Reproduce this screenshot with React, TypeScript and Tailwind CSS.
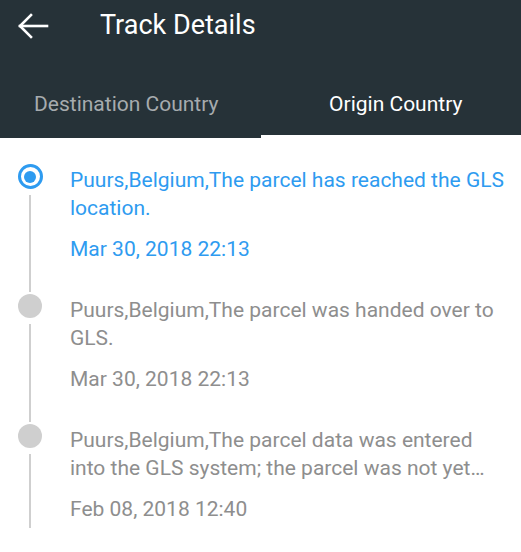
import React from "react";

const items = [
  {
    text: "Puurs,Belgium,The parcel has reached the GLS location.",
    date: "Mar 30, 2018 22:13",
    active: true,
  },
  {
    text: "Puurs,Belgium,The parcel was handed over to GLS.",
    date: "Mar 30, 2018 22:13",
    active: false,
  },
  {
    text: "Puurs,Belgium,The parcel data was entered into the GLS system; the parcel was not yet handed over to GLS.",
    date: "Feb 08, 2018 12:40",
    active: false,
  },
];

export default function App() {
  return (
    <div
      className="w-[521px] h-[552px] bg-white overflow-hidden"
      style={{ fontFamily: "Roboto, 'Liberation Sans', sans-serif" }}
    >
      <div className="bg-[#263238]">
        <div className="h-[52px] flex items-center">
          <div className="w-[100px] pl-[17px] flex items-center">
            <svg width="32" height="28" viewBox="0 0 32 28" fill="none" stroke="white" strokeWidth="2.6" strokeLinecap="square">
              <path d="M3 14 H30" />
              <path d="M14 3 L3 14 L14 25" />
            </svg>
          </div>
          <div className="text-white text-[27px] leading-none -mt-[2px]">Track Details</div>
        </div>
        <div className="flex h-[86px]">
          <div className="flex-1 flex flex-col">
            <div className="flex-1 flex items-center justify-center text-[21px] text-[#a6abae] pt-[22px] pr-[8px]">
              Destination Country
            </div>
            <div className="h-[3px]" />
          </div>
          <div className="flex-1 flex flex-col">
            <div className="flex-1 flex items-center justify-center text-[21px] text-white pt-[22px] pl-[10px]">
              Origin Country
            </div>
            <div className="h-[3px] bg-white" />
          </div>
        </div>
      </div>
      <div className="pt-[24px]">
        {items.map((it, i) => (
          <div key={i} className="flex">
            <div className="w-[60px] flex flex-col items-center shrink-0">
              {it.active ? (
                <div className="mt-[2px] w-[25px] h-[25px] rounded-full border-[3px] border-[#2e9bf0] flex items-center justify-center">
                  <div className="w-[12px] h-[12px] rounded-full bg-[#2e9bf0]" />
                </div>
              ) : (
                <div className="mt-[2px] w-[24px] h-[24px] rounded-full bg-[#cfcfcf]" />
              )}
              <div className="flex-1 w-[2px] bg-[#cfcfcf] mt-[6px]" />
            </div>
            <div
              className={`flex-1 pr-[10px] pl-[10px] pt-[4px] ${i === items.length - 1 ? "pb-[5px]" : "pb-[29px]"} ${it.active ? "text-[#2e9bf0]" : "text-[#8e8e8e]"}`}
            >
              <div className="text-[21px] leading-[28px] line-clamp-2">{it.text}</div>
              <div className="text-[21px] leading-[28px] mt-[13px]">{it.date}</div>
            </div>
          </div>
        ))}
      </div>
    </div>
  );
}
